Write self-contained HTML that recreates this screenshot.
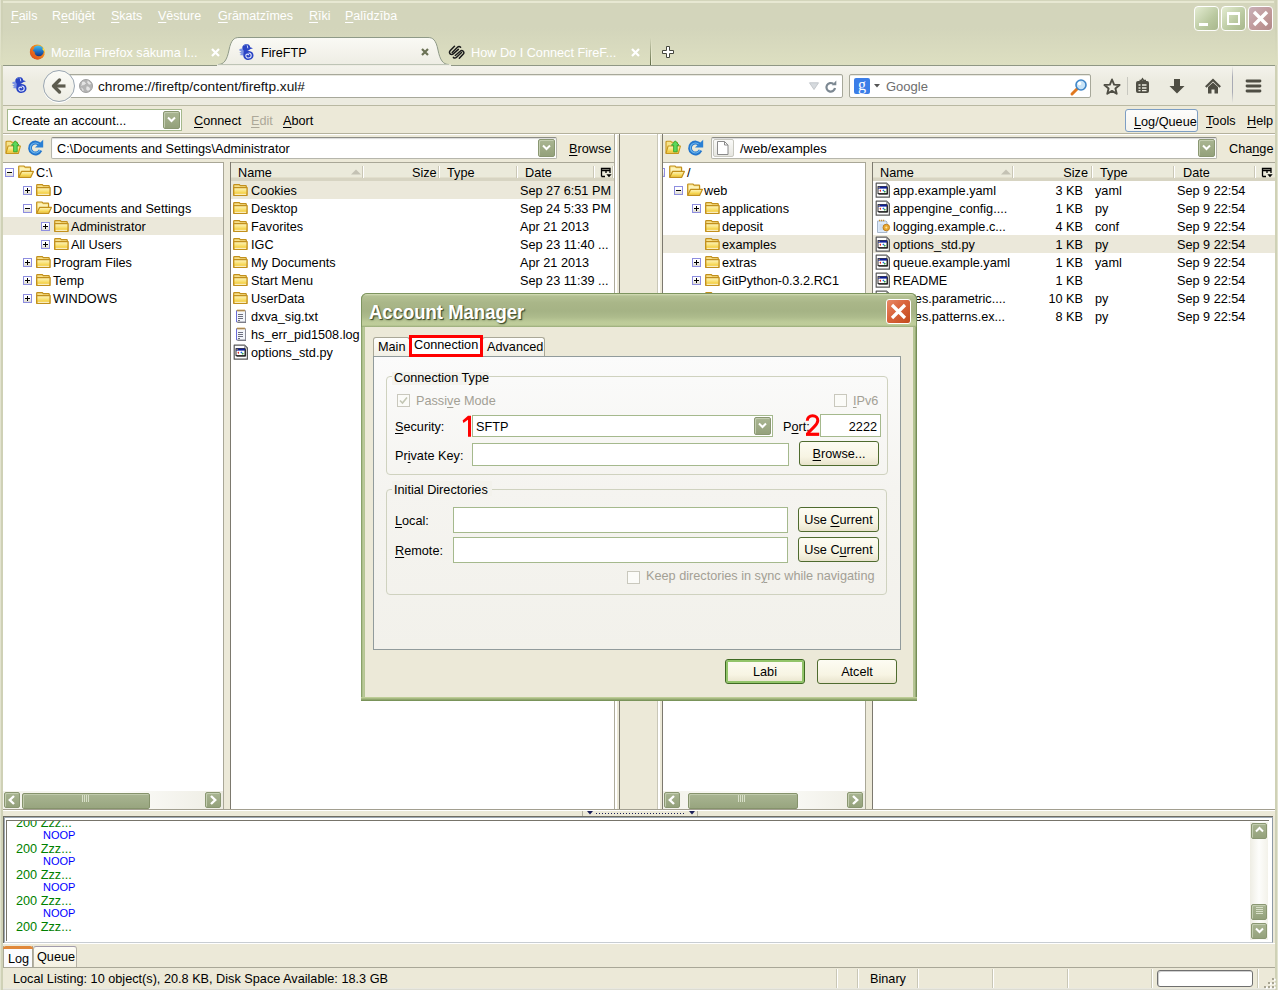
<!DOCTYPE html>
<html><head><meta charset="utf-8">
<style>
*{box-sizing:border-box;margin:0;padding:0}
html,body{width:1278px;height:990px;overflow:hidden}
body{position:relative;background:#d3d5bb;font-family:"Liberation Sans",sans-serif;font-size:12.7px;color:#000}
.a{position:absolute}
.t{position:absolute;white-space:nowrap;line-height:18px}
.u{text-decoration:underline;text-underline-offset:2px;text-decoration-thickness:1px}
svg{position:absolute;overflow:visible}
.menu{color:#fff;font-size:12.5px;top:7px}
.row{position:absolute;height:18px;left:0;right:0}
.row .t{top:1px}
.sel{background:#ebe8da}
.exp{position:absolute;width:9px;height:9px;border:1px solid #8e8ee0;background:linear-gradient(#fff 30%,#dedcd2);top:5px}
.exp:before{content:"";position:absolute;left:1px;top:3px;width:5px;height:1px;background:#000}
.exp.p:after{content:"";position:absolute;left:3px;top:1px;width:1px;height:5px;background:#000}
.hdr{position:absolute;height:18px;background:#ebeadb;border-bottom:3px solid #d7d4c2;box-shadow:inset 0 -1px 0 #e2dfcd}
.hsep{position:absolute;top:3px;width:2px;height:12px;border-left:1px solid #cac7b6;border-right:1px solid #fff}
.fi{position:absolute;width:16px;height:16px;top:1px}
.sb{position:absolute;width:16px;height:16px;border-radius:2px;background:linear-gradient(#a9b592,#94a17b);border:1px solid #8a9772;box-shadow:inset 1px 1px 0 #c3cdb0}
.thumb{position:absolute;height:16px;border-radius:2px;background:linear-gradient(#a9b592,#98a57f);border:1px solid #86936c;box-shadow:inset 1px 1px 0 #c0caab}
.inp{position:absolute;background:#fff;border:1px solid #a5b98d}
.btn{position:absolute;border:1px solid #4f6b2f;border-radius:3px;background:linear-gradient(#fdfcf3,#f7f4e3 65%,#e8e3cc);text-align:center;line-height:24px}
.chk{position:absolute;width:13px;height:13px;border:1px solid #c9c8bd;background:#fbfbf8}
.gray{color:#a3a095}
</style></head><body>
<svg width="0" height="0" style="position:absolute">
<defs>
<linearGradient id="fgy" x1="0" y1="0" x2="0" y2="1"><stop offset="0" stop-color="#fff6b8"/><stop offset="1" stop-color="#f2cf4a"/></linearGradient>
<linearGradient id="fgb" x1="0" y1="0" x2="0" y2="1"><stop offset="0" stop-color="#fbe88e"/><stop offset="1" stop-color="#e9c24a"/></linearGradient>
<linearGradient id="fgf" x1="0" y1="0" x2="0" y2="1"><stop offset="0" stop-color="#fef6c0"/><stop offset=".45" stop-color="#f9e27a"/><stop offset=".8" stop-color="#f2cc3a"/><stop offset="1" stop-color="#fbeaa8"/></linearGradient>
<symbol id="fc" viewBox="0 0 16 16">
<path d="M.7 13.3V3.2C.7 2.7 1 2.6 1.4 2.6H6.3L7.3 3.7H12.6C13 3.7 13.3 4 13.3 4.4V6H.7z" fill="#f7e08a" stroke="#c2901c" stroke-width="1.2"/>
<path d="M.7 5.6H14.1V13.3H.7z" fill="url(#fgf)" stroke="#c2901c" stroke-width="1.3" stroke-linejoin="round"/>
<path d="M1.8 12.3H13" stroke="#fffbe8" stroke-width=".9"/>
</symbol>
<symbol id="fo" viewBox="0 0 16 16">
<path d="M.7 13.3V2.6C.7 2.2 1 2 1.4 2H6L7 3.1H12C12.4 3.1 12.6 3.4 12.6 3.8V7.6" fill="#f7e08a" stroke="#c2901c" stroke-width="1.2"/>
<path d="M1.8 3.5H6.2L7 4.4H11.6V7.5H1.8z" fill="#fdf3b8"/>
<path d="M.7 13.3L3.6 7.4H15.4L12.7 13.3z" fill="url(#fgf)" stroke="#c2901c" stroke-width="1.2" stroke-linejoin="round"/>
</symbol>
<symbol id="fnote" viewBox="0 0 16 16">
<path d="M4.5 2.5h7.5c.6 0 1 .4 1 1v11.5h-8.5z" fill="#6e6e78"/>
<path d="M3.5 2.5h8c.6 0 1 .4 1 1v10.5h-9z" fill="#f3f6fb" stroke="#8a8c98"/>
<path d="M3.5 3v11" stroke="#6a6ad8"/>
<path d="M5 1.5v2M7 1.5v2M9 1.5v2M11 1.5v2" stroke="#c08828" stroke-width="1.2"/>
<path d="M5 6.5h5M5 8.5h5M5 10.5h5M5 12.5h2" stroke="#6e7080"/>
</symbol>
<symbol id="fapp" viewBox="0 0 16 16">
<path d="M1.2 1.2H11.6L14.4 4V15.2H1.2z" fill="#fdfdfd" stroke="#5a5a5a" stroke-width="1.2" stroke-linejoin="round"/>
<path d="M11.6 1.2V4H14.4" fill="none" stroke="#8a8a8a" stroke-width=".8"/>
<rect x="3" y="4.6" width="9" height="7" fill="#fff" stroke="#1a1a1a" stroke-width=".9"/>
<rect x="3" y="4.6" width="9" height="2" fill="#10209a"/>
<rect x="3.6" y="4.9" width="1" height="1" fill="#f0c020"/>
<path d="M4.3 8.8L6 7.6V10z" fill="#e02020"/>
<path d="M8.4 7.6L9.5 8.6 8.4 9.6 7.3 8.6z" fill="#1a6ae0"/>
<path d="M9.8 8.8L10.9 9.8 9.8 10.8 8.7 9.8z" fill="#20a030"/>
<path d="M3.5 12.2H12.6V5.2" fill="none" stroke="#222" stroke-width="1"/>
</symbol>
<symbol id="fconf" viewBox="0 0 16 16">
<path d="M2.5 3h8.5l1 1v10.5h-9.5z" fill="#dce9f8" stroke="#a8b8cc"/>
<path d="M4 2.5h6" stroke="#c89030" stroke-width="1.6" stroke-dasharray="1.2 .8"/>
<path d="M4.5 7h4M4.5 9h3M4.5 11h4" stroke="#b8c8dc" stroke-width=".8"/>
<circle cx="11.3" cy="9.5" r="3.3" fill="#eaa830" stroke="#b87818" stroke-width=".9"/>
<circle cx="11.3" cy="9.5" r="1" fill="#fbe6a8"/>
</symbol>
</defs>
</svg>

<!-- window frame lines -->
<div class="a" style="left:2px;top:1px;width:1272px;height:2px;background:#e7e8d2"></div>
<div class="a" style="left:0;top:0;width:3px;height:990px;background:#cfd1b6;border-left:1px solid #e2e3cf"></div>
<div class="a" style="left:1275px;top:0;width:3px;height:990px;background:#cfd1b6;border-right:1px solid #e2e3cf"></div>

<!-- MENU -->
<div class="t menu" style="left:11px"><span class="u">F</span>ails</div>
<div class="t menu" style="left:52px">R<span class="u">e</span>diģēt</div>
<div class="t menu" style="left:111px"><span class="u">S</span>kats</div>
<div class="t menu" style="left:158px"><span class="u">V</span>ēsture</div>
<div class="t menu" style="left:218px"><span class="u">G</span>rāmatzīmes</div>
<div class="t menu" style="left:309px"><span class="u">R</span>īki</div>
<div class="t menu" style="left:345px"><span class="u">P</span>alīdzība</div>

<!-- window buttons -->
<div class="a" style="left:1194px;top:6px;width:25px;height:25px;border:1px solid #fff;border-radius:4px;background:linear-gradient(135deg,#e4ecd2,#bac9a0 60%,#a8b78c)"></div>
<div class="a" style="left:1199px;top:23px;width:9px;height:3px;background:#fff"></div>
<div class="a" style="left:1221px;top:6px;width:25px;height:25px;border:1px solid #fff;border-radius:4px;background:linear-gradient(135deg,#e4ecd2,#bac9a0 60%,#a8b78c)"></div>
<div class="a" style="left:1227px;top:12px;width:13px;height:13px;border:2px solid #fff;border-top-width:3px"></div>
<div class="a" style="left:1248px;top:6px;width:25px;height:25px;border:1px solid #fff;border-radius:4px;background:linear-gradient(135deg,#c8b0b8,#c09898 60%,#b08888)"></div>
<svg style="left:1252px;top:10px" width="17" height="17"><path d="M2 2L15 15M15 2L2 15" stroke="#fff" stroke-width="3.4"/></svg>

<!-- TABS -->
<div class="a" style="left:0;top:28px;width:1278px;height:37px;background:linear-gradient(rgba(221,223,193,0),#dddfc1)"></div>
<div class="a" style="left:3px;top:65px;width:1272px;height:1px;background:#8f9784"></div>
<svg style="left:218px;top:36px" width="232" height="30">
<defs><linearGradient id="tabg" x1="0" y1="0" x2="0" y2="1"><stop offset="0" stop-color="#fafaf5"/><stop offset="1" stop-color="#eeede4"/></linearGradient></defs>
<path d="M0 28.5 C6 28.5 9 24 11 14 C13 4 16 1.5 21 1.5 H210 C215 1.5 218 4 220 14 C222 24 225 28.5 231 28.5 Z" fill="url(#tabg)" stroke="#8f9a88" stroke-width="1"/>
<rect x="-1" y="28.5" width="234" height="2" fill="#eeede4"/>
</svg>
<!-- tab1 firefox -->
<svg style="left:29px;top:44px" width="16" height="16">
<defs><linearGradient id="ffb" x1="0" y1="0" x2="0" y2="1"><stop offset="0" stop-color="#45c4f4"/><stop offset=".55" stop-color="#1f6cc0"/><stop offset="1" stop-color="#16307a"/></linearGradient>
<linearGradient id="ffo" x1="1" y1="0" x2="0" y2="1"><stop offset="0" stop-color="#ffd21e"/><stop offset=".35" stop-color="#f38a1c"/><stop offset="1" stop-color="#d8401a"/></linearGradient></defs>
<circle cx="8.3" cy="8" r="7.5" fill="url(#ffo)"/>
<circle cx="9.2" cy="7" r="5.6" fill="url(#ffb)"/>
<path d="M1 6.5C1.2 11.8 4.8 15.5 9 15.4 12.5 15.3 15.2 12.8 15.6 9.8 14.2 11.8 11.8 12.8 9.5 12.5 6.8 12.1 5.3 10 5.6 7.8 4.6 7.5 3.6 6.6 3.8 5.2 4.5 5.6 5.2 5.4 5.6 4.8 4.6 4.2 4.2 3.2 4.5 1.8 2.6 2.8 1.4 4.4 1 6.5z" fill="url(#ffo)"/>
<path d="M14 3.3C15.3 5 15.8 7 15.6 8.8 15 7 14.3 6 13.4 5.5z" fill="#ffe040"/>
</svg>
<div class="t" style="left:51px;top:44px;color:#fff;font-size:12.7px">Mozilla Firefox sākuma l...</div>
<svg style="left:211px;top:48px" width="9" height="9"><path d="M1 1L8 8M8 1L1 8" stroke="#fff" stroke-width="2.2"/></svg>
<!-- tab2 fireftp -->
<svg style="left:239px;top:44px" width="16" height="17"><g id="sea">
<path d="M0.5 5L4.5 4.2 4.8 11.5 0.5 11 2.5 9.8 0.3 8.8 2.5 7.6 0.3 6.5z" fill="#7d94e4"/>
<path d="M3.5 2.5C4.5 0.5 6.5 0 8.5 0.3 10 0.6 11 1.6 11.2 3.2L14 4.3 11 5.3C10.5 6.2 9.3 6.7 8 6.9L10 6.9C12.8 7 14.5 8.8 14.5 11.3 14.5 14 12.3 16 9.5 16 6.5 16 4.3 14 4.3 11.2 4.3 9 4.8 7.5 4.3 6.3 3.6 5 3 3.8 3.5 2.5z" fill="#2a44c4"/>
<path d="M9.5 9C11 9 12.2 10.1 12.2 11.5S11 14 9.4 14C7.9 14 6.8 12.9 6.8 11.7 6.8 10.7 7.5 10.1 8.4 10.1 9.2 10.1 9.7 10.7 9.7 11.3" fill="none" stroke="#dfe6fb" stroke-width="1.1"/>
<path d="M8.3 1.5L8.8 4.3" stroke="#c8d4f8" stroke-width="1"/>
<path d="M5 1.5C6 .8 7 .7 8 1" stroke="#6f8ff0" stroke-width="1"/>
</g></svg>
<div class="t" style="left:261px;top:44px;color:#000;font-size:12.7px">FireFTP</div>
<svg style="left:421px;top:48px" width="8" height="8"><path d="M1 1L7 7M7 1L1 7" stroke="#6b7255" stroke-width="2.2"/></svg>
<!-- tab3 squarespace -->
<svg style="left:446px;top:43px" width="22" height="18"><g fill="none" stroke="#1a1a1a" stroke-width="1.5" stroke-linecap="round"><path d="M8.5 3.3L4.3 7.5C3 8.8 3.3 10.6 4.6 11.2 5.6 11.7 6.7 11.4 7.5 10.6L12.4 6.4"/><path d="M6.2 9.5L11.5 4.2C12.3 3.4 13.7 3.3 14.6 4.3"/><path d="M9.3 12.5L14.2 8.2C15 7.4 16.3 7.3 17.2 8.2 18.2 9.2 18 10.3 17.3 11L13.3 15.3"/><path d="M15.5 9.5L10.3 14.5C9.5 15.3 8.2 15.3 7.4 14.4"/></g></svg>
<div class="t" style="left:471px;top:44px;color:#fff;font-size:12.7px">How Do I Connect FireF...</div>
<svg style="left:631px;top:48px" width="9" height="9"><path d="M1 1L8 8M8 1L1 8" stroke="#fff" stroke-width="2.2"/></svg>
<div class="a" style="left:650px;top:38px;width:1px;height:27px;background:linear-gradient(rgba(90,100,60,0),#5f6a45)"></div><div class="a" style="left:651px;top:38px;width:1px;height:27px;background:linear-gradient(rgba(255,255,240,0),#eef0d8)"></div>
<svg style="left:662px;top:46px" width="12" height="12"><path d="M4.5 .5h3v4h4v3h-4v4h-3v-4h-4v-3h4z" fill="#fff" stroke="#45473e" stroke-linejoin="round"/></svg>
<!-- NAVBAR -->
<div class="a" style="left:3px;top:66px;width:1272px;height:40px;background:linear-gradient(#f4f3ec,#ecebe0 40%);border-bottom:1px solid #b9b8a2"></div>
<svg style="left:12px;top:77px" width="16" height="17"><use href="#sea"/></svg>
<!-- url bar -->
<div class="a" style="left:68px;top:74px;width:775px;height:24px;background:#fff;border:1px solid #a7a89a;border-radius:2px;box-shadow:inset 0 1px 0 #e8e8e0"></div>
<div class="a" style="left:43px;top:70px;width:32px;height:32px;border-radius:50%;border:1px solid #9aa6b2;background:linear-gradient(#fbfbf7,#eeede4);box-shadow:0 1px 0 #fff"></div>
<svg style="left:51px;top:77px" width="16" height="18"><path d="M3.5 9H14.5" stroke="#5d5c4f" stroke-width="3.2"/><path d="M8.5 3L2.5 9 8.5 15" fill="none" stroke="#5d5c4f" stroke-width="3.4" stroke-linecap="round" stroke-linejoin="round"/></svg>
<svg style="left:79px;top:79px" width="14" height="14"><circle cx="7" cy="7" r="6.5" fill="#b4b4b4" stroke="#a0a0a0"/><path d="M3 3.5C4.5 2.5 6 3 6.5 4.5 5.5 6 3.5 5.5 2.5 6.5M8.5 2C10 2.5 11 3.5 11.5 5 10 5.5 9 4.5 8.5 3.5M7.5 8C9 7.5 11 8.5 10.5 10.5 9 12 7.5 11 7.5 9.5M2.5 9C3.5 9.5 4.5 10.5 4 12" fill="#e4e4e4" stroke="#e8e8e8" stroke-width=".8"/></svg>
<div class="t" style="left:98px;top:78px;font-size:13.7px;color:#111">chrome://fireftp/content/fireftp.xul#</div>
<svg style="left:809px;top:82px" width="10" height="8"><path d="M.5 .8H9.5L5 7.5z" fill="#d6dade" stroke="#c4c8cc"/></svg>
<svg style="left:824px;top:80px" width="14" height="14"><path d="M11 8A4.3 4.3 0 1 1 9.4 3.9" fill="none" stroke="#7c8892" stroke-width="2.2"/><path d="M7.8 5.3H12.3V.5z" fill="#7c8892"/></svg>
<!-- search -->
<div class="a" style="left:849px;top:74px;width:242px;height:24px;background:#fff;border:1px solid #a7a89a;border-radius:2px;box-shadow:inset 0 1px 0 #e8e8e0"></div>
<div class="a" style="left:854px;top:78px;width:16px;height:16px;background:#3b7ee8;border-radius:2px;color:#fff;font-family:'Liberation Serif',serif;font-size:16px;line-height:13px;text-align:center">g</div>
<svg style="left:874px;top:84px" width="6" height="4"><path d="M0 0H6L3 3.5z" fill="#555"/></svg>
<div class="t" style="left:886px;top:78px;font-size:13px;color:#6e6e6e">Google</div>
<svg style="left:1070px;top:78px" width="18" height="18"><path d="M2 16L7.5 10.5" stroke="#e07820" stroke-width="3" stroke-linecap="round"/><circle cx="11" cy="7" r="5" fill="#c8e4f8" stroke="#3f86c8" stroke-width="1.6"/><circle cx="9.5" cy="5.5" r="1.8" fill="#fff"/></svg>
<!-- toolbar icons -->
<svg style="left:1103px;top:78px" width="18" height="17"><path d="M9 1.5L11.1 6.6 16.6 7 12.4 10.5 13.7 15.8 9 12.9 4.3 15.8 5.6 10.5 1.4 7 6.9 6.6z" fill="none" stroke="#4f4e44" stroke-width="1.9" stroke-linejoin="round"/></svg>
<div class="a" style="left:1127px;top:77px;width:1px;height:18px;background:#c8c8c0"></div>
<svg style="left:1135px;top:78px" width="15" height="16"><path d="M4.5 2.5h2l1-1.5 1 1.5h2.5" fill="none" stroke="#4f4e44" stroke-width="1.6"/><rect x="1" y="3" width="13" height="12" rx="2" fill="#4f4e44"/><path d="M3.5 7h2M7 7h4.5M3.5 10h2M7 10h4.5M3.5 12.7h2M7 12.7h4.5" stroke="#ecebe0" stroke-width="1.3"/></svg>
<svg style="left:1169px;top:78px" width="16" height="16"><path d="M5 1h6v7h4.5L8 15.5.5 8H5z" fill="#4f4e44"/></svg>
<svg style="left:1205px;top:79px" width="16" height="15"><path d="M.8 8L8 1 15.2 8" fill="none" stroke="#4f4e44" stroke-width="2.2"/><path d="M3 8L8 3.5 13 8V14.5H9.5V10.5H6.5V14.5H3z" fill="#4f4e44"/></svg>
<div class="a" style="left:1232px;top:66px;width:1px;height:37px;background:linear-gradient(rgba(160,160,170,0),#a8aab4 30%,#a8aab4 70%,rgba(160,160,170,0))"></div>
<svg style="left:1245px;top:79px" width="18" height="14"><path d="M2 2H15M2 7H15M2 12H15" stroke="#4f4e44" stroke-width="2.8" stroke-linecap="round"/></svg>

<!-- FTP TOOLBAR area bg -->
<div class="a" style="left:3px;top:106px;width:1272px;height:884px;background:#ece9d8"></div>
<div class="a" style="left:3px;top:133px;width:1272px;height:1px;background:#b4b19c;box-shadow:0 1px 0 #fff"></div>
<!-- account select -->
<div class="a" style="left:7px;top:109px;width:175px;height:22px;background:#fff;border:1px solid #a5b98d"></div>
<div class="t" style="left:12px;top:112px">Create an account...</div>
<div class="sb" style="left:163px;top:111px;width:17px;height:18px"></div>
<svg style="left:167px;top:116px" width="9" height="7"><path d="M1 1.5L4.5 5 8 1.5" fill="none" stroke="#fff" stroke-width="2"/></svg>
<div class="t" style="left:194px;top:112px"><span class="u">C</span>onnect</div>
<div class="t" style="left:251px;top:112px;color:#aca899"><span class="u">E</span>dit</div>
<div class="t" style="left:283px;top:112px"><span class="u">A</span>bort</div>
<div class="a" style="left:1125px;top:109px;width:73px;height:23px;background:linear-gradient(#fdfdfb,#f4f3ee);border:1px solid #7d9ec4;border-radius:3px"></div>
<div class="t" style="left:1134px;top:113px"><span class="u">L</span>og/Queue</div>
<div class="t" style="left:1206px;top:112px"><span class="u">T</span>ools</div>
<div class="t" style="left:1247px;top:112px"><span class="u">H</span>elp</div>
<!-- PATH BARS -->
<svg style="left:5px;top:140px" width="17" height="15"><path d="M1 13V2.2C1 1.6 1.4 1.3 2 1.3H5.8L6.8 2.3H11.5C12 2.3 12.4 2.6 12.4 3.1V6" fill="#f6e28a" stroke="#c8961c" stroke-width="1.1"/><path d="M1 13.4L3.1 6H15.4L13.4 13.4z" fill="url(#fgf)" stroke="#c8961c" stroke-width="1.1" stroke-linejoin="round"/><path d="M10.3 .8L14.2 5.3H12.2V11.8H8.6V5.3H6.4z" fill="#5ad85a" stroke="#2a9a2a" stroke-width=".8"/></svg>
<svg style="left:27px;top:139px" width="17" height="17"><path d="M13 5.85A5.5 5.5 0 1 0 13.5 11.3" fill="none" stroke="#2476cc" stroke-width="3.8"/><path d="M12.6 6.3A5 5 0 1 0 13 10.9" fill="none" stroke="#6cb6ee" stroke-width="1.2"/><path d="M8 8.6H16.2V.8z" fill="#2a80d4"/></svg>
<div class="a" style="left:51px;top:137px;width:506px;height:22px;background:#fff;border:1px solid #b6b6ac;border-top-color:#8d8d86;border-radius:2px;box-shadow:inset 0 1px 1px rgba(0,0,0,.15)"></div>
<div class="t" style="left:57px;top:140px">C:\Documents and Settings\Administrator</div>
<div class="sb" style="left:538px;top:139px;width:17px;height:18px"></div>
<svg style="left:542px;top:144px" width="9" height="7"><path d="M1 1.5L4.5 5 8 1.5" fill="none" stroke="#fff" stroke-width="2"/></svg>
<div class="t" style="left:569px;top:140px"><span class="u">B</span>rowse</div>

<svg style="left:665px;top:140px" width="17" height="15"><path d="M1 13V2.2C1 1.6 1.4 1.3 2 1.3H5.8L6.8 2.3H11.5C12 2.3 12.4 2.6 12.4 3.1V6" fill="#f6e28a" stroke="#c8961c" stroke-width="1.1"/><path d="M1 13.4L3.1 6H15.4L13.4 13.4z" fill="url(#fgf)" stroke="#c8961c" stroke-width="1.1" stroke-linejoin="round"/><path d="M10.3 .8L14.2 5.3H12.2V11.8H8.6V5.3H6.4z" fill="#5ad85a" stroke="#2a9a2a" stroke-width=".8"/></svg>
<svg style="left:687px;top:139px" width="17" height="17"><path d="M13 5.85A5.5 5.5 0 1 0 13.5 11.3" fill="none" stroke="#2476cc" stroke-width="3.8"/><path d="M12.6 6.3A5 5 0 1 0 13 10.9" fill="none" stroke="#6cb6ee" stroke-width="1.2"/><path d="M8 8.6H16.2V.8z" fill="#2a80d4"/></svg>
<div class="a" style="left:711px;top:137px;width:506px;height:22px;background:#fff;border:1px solid #b6b6ac;border-top-color:#8d8d86;border-radius:2px;box-shadow:inset 0 1px 1px rgba(0,0,0,.15)"></div>
<div class="a" style="left:713px;top:139px;width:21px;height:18px;background:linear-gradient(#fafaf8,#e6e6e0);border:1px solid #c8c8c0;border-radius:2px"></div>
<svg style="left:717px;top:141px" width="12" height="14"><path d="M.5 .5h7l3.5 3.5v9.5H.5z" fill="#fff" stroke="#8a8a8a"/><path d="M7.5 .5v3.5h3.5" fill="none" stroke="#8a8a8a"/></svg>
<div class="t" style="left:740px;top:140px;font-size:13px">/web/examples</div>
<div class="sb" style="left:1198px;top:139px;width:17px;height:18px"></div>
<svg style="left:1202px;top:144px" width="9" height="7"><path d="M1 1.5L4.5 5 8 1.5" fill="none" stroke="#fff" stroke-width="2"/></svg>
<div class="t" style="left:1229px;top:140px">Cha<span class="u">n</span>ge</div>

<!-- LEFT TREE -->
<div class="a" style="left:3px;top:162px;width:221px;height:647px;background:#fff;border-top:1px solid #a9a797;border-right:1px solid #a9a797;overflow:hidden" id="ltree">
 <div class="row" style="top:0"><div class="exp" style="left:2px"></div><svg class="fi" style="left:15px"><use href="#fo"/></svg><div class="t" style="left:33px">C:\</div></div>
 <div class="row" style="top:18px"><div class="exp p" style="left:20px"></div><svg class="fi" style="left:33px"><use href="#fc"/></svg><div class="t" style="left:50px">D</div></div>
 <div class="row" style="top:36px"><div class="exp" style="left:20px"></div><svg class="fi" style="left:33px"><use href="#fo"/></svg><div class="t" style="left:50px">Documents and Settings</div></div>
 <div class="row sel" style="top:54px"><div class="exp p" style="left:38px"></div><svg class="fi" style="left:51px"><use href="#fc"/></svg><div class="t" style="left:68px">Administrator</div></div>
 <div class="row" style="top:72px"><div class="exp p" style="left:38px"></div><svg class="fi" style="left:51px"><use href="#fc"/></svg><div class="t" style="left:68px">All Users</div></div>
 <div class="row" style="top:90px"><div class="exp p" style="left:20px"></div><svg class="fi" style="left:33px"><use href="#fc"/></svg><div class="t" style="left:50px">Program Files</div></div>
 <div class="row" style="top:108px"><div class="exp p" style="left:20px"></div><svg class="fi" style="left:33px"><use href="#fc"/></svg><div class="t" style="left:50px">Temp</div></div>
 <div class="row" style="top:126px"><div class="exp p" style="left:20px"></div><svg class="fi" style="left:33px"><use href="#fc"/></svg><div class="t" style="left:50px">WINDOWS</div></div>
 <!-- h scrollbar -->
 <div class="a" style="left:0;top:628px;width:220px;height:18px;background:linear-gradient(90deg,#f3f2ea,#fdfdfb 50%,#eeede4)"></div>
 <div class="sb" style="left:1px;top:629px"></div>
 <div class="thumb" style="left:19px;top:630px;width:128px"></div>
 <div class="sb" style="left:202px;top:629px"></div>
</div>
<svg style="left:8px;top:795px" width="8" height="10"><path d="M6 1L1.8 5 6 9" fill="none" stroke="#fff" stroke-width="2.4"/></svg>
<svg style="left:209px;top:795px" width="8" height="10"><path d="M2 1L6.2 5 2 9" fill="none" stroke="#fff" stroke-width="2.4"/></svg>
<svg style="left:82px;top:795px" width="8" height="7"><path d="M.5 0v7M2.5 0v7M4.5 0v7M6.5 0v7" stroke="#d8dfc8" stroke-width="1"/></svg>

<!-- left splitter tree/list -->
<div class="a" style="left:230px;top:162px;width:1px;height:647px;background:#7c796e"></div>

<!-- LEFT LIST -->
<div class="a" style="left:231px;top:162px;width:383px;height:647px;background:#fff;border-top:1px solid #a9a797;overflow:hidden">
 <div class="hdr" style="left:0;top:0;width:383px"></div>
 <div class="t" style="left:7px;top:1px">Name</div>
 <svg style="left:120px;top:6px" width="10" height="6"><path d="M0 5.5L5 .5 10 5.5z" fill="#c4c2b4"/></svg>
 <div class="hsep" style="left:131px"></div>
 <div class="t" style="left:181px;top:1px;width:23px;text-align:right">Size</div>
 <div class="hsep" style="left:207px"></div>
 <div class="t" style="left:216px;top:1px">Type</div>
 <div class="hsep" style="left:285px"></div>
 <div class="t" style="left:294px;top:1px">Date</div>
 <div class="hsep" style="left:362px"></div>
 <div class="hsep" style="left:381px"></div><svg style="left:369px;top:4px" width="12" height="11"><path d="M1.5 9.5V1.5H10V6M1.5 9.5H5M1.5 3.5H10M6 3.5V6" fill="none" stroke="#000" stroke-width="1.3"/><path d="M6.3 7.2H11.7L9 10.2z" fill="#000"/></svg>
 <div class="row sel" style="top:18px"><svg class="fi" style="left:2px"><use href="#fc"/></svg><div class="t" style="left:20px">Cookies</div><div class="t" style="left:289px">Sep 27 6:51 PM</div></div>
 <div class="row" style="top:36px"><svg class="fi" style="left:2px"><use href="#fc"/></svg><div class="t" style="left:20px">Desktop</div><div class="t" style="left:289px">Sep 24 5:33 PM</div></div>
 <div class="row" style="top:54px"><svg class="fi" style="left:2px"><use href="#fc"/></svg><div class="t" style="left:20px">Favorites</div><div class="t" style="left:289px">Apr 21 2013</div></div>
 <div class="row" style="top:72px"><svg class="fi" style="left:2px"><use href="#fc"/></svg><div class="t" style="left:20px">IGC</div><div class="t" style="left:289px">Sep 23 11:40 ...</div></div>
 <div class="row" style="top:90px"><svg class="fi" style="left:2px"><use href="#fc"/></svg><div class="t" style="left:20px">My Documents</div><div class="t" style="left:289px">Apr 21 2013</div></div>
 <div class="row" style="top:108px"><svg class="fi" style="left:2px"><use href="#fc"/></svg><div class="t" style="left:20px">Start Menu</div><div class="t" style="left:289px">Sep 23 11:39 ...</div></div>
 <div class="row" style="top:126px"><svg class="fi" style="left:2px"><use href="#fc"/></svg><div class="t" style="left:20px">UserData</div></div>
 <div class="row" style="top:144px"><svg class="fi" style="left:2px"><use href="#fnote"/></svg><div class="t" style="left:20px">dxva_sig.txt</div></div>
 <div class="row" style="top:162px"><svg class="fi" style="left:2px"><use href="#fnote"/></svg><div class="t" style="left:20px">hs_err_pid1508.log</div></div>
 <div class="row" style="top:180px"><svg class="fi" style="left:2px"><use href="#fapp"/></svg><div class="t" style="left:20px">options_std.py</div></div>
</div>

<!-- middle splitter -->
<div class="a" style="left:614px;top:134px;width:1px;height:675px;background:#aeab9b"></div>
<div class="a" style="left:615px;top:134px;width:2px;height:675px;background:#fff"></div>
<div class="a" style="left:619px;top:134px;width:1px;height:675px;background:#7c796e"></div>
<div class="a" style="left:657px;top:134px;width:1px;height:675px;background:#c9c7b8"></div>
<div class="a" style="left:658px;top:134px;width:2px;height:675px;background:#fff"></div>
<div class="a" style="left:662px;top:134px;width:1px;height:675px;background:#7c796e"></div>

<!-- RIGHT TREE -->
<div class="a" style="left:663px;top:162px;width:203px;height:647px;background:#fff;border-top:1px solid #a9a797;border-right:1px solid #a9a797;overflow:hidden">
 <div class="row" style="top:0"><div class="exp" style="left:-7px"></div><svg class="fi" style="left:6px"><use href="#fo"/></svg><div class="t" style="left:24px">/</div></div>
 <div class="row" style="top:18px"><div class="exp" style="left:11px"></div><svg class="fi" style="left:24px"><use href="#fo"/></svg><div class="t" style="left:41px">web</div></div>
 <div class="row" style="top:36px"><div class="exp p" style="left:29px"></div><svg class="fi" style="left:42px"><use href="#fc"/></svg><div class="t" style="left:59px">applications</div></div>
 <div class="row" style="top:54px"><svg class="fi" style="left:42px"><use href="#fc"/></svg><div class="t" style="left:59px">deposit</div></div>
 <div class="row sel" style="top:72px"><svg class="fi" style="left:42px"><use href="#fc"/></svg><div class="t" style="left:59px">examples</div></div>
 <div class="row" style="top:90px"><div class="exp p" style="left:29px"></div><svg class="fi" style="left:42px"><use href="#fc"/></svg><div class="t" style="left:59px">extras</div></div>
 <div class="row" style="top:108px"><div class="exp p" style="left:29px"></div><svg class="fi" style="left:42px"><use href="#fc"/></svg><div class="t" style="left:59px">GitPython-0.3.2.RC1</div></div>
 <div class="row" style="top:126px"><div class="exp p" style="left:29px"></div><svg class="fi" style="left:42px"><use href="#fc"/></svg><div class="t" style="left:59px">html5lib</div></div>
 <div class="a" style="left:0;top:628px;width:202px;height:18px;background:linear-gradient(90deg,#f3f2ea,#fdfdfb 50%,#eeede4)"></div>
 <div class="sb" style="left:1px;top:629px"></div>
 <div class="thumb" style="left:25px;top:630px;width:110px"></div>
 <div class="sb" style="left:184px;top:629px"></div>
</div>
<svg style="left:668px;top:795px" width="8" height="10"><path d="M6 1L1.8 5 6 9" fill="none" stroke="#fff" stroke-width="2.4"/></svg>
<svg style="left:851px;top:795px" width="8" height="10"><path d="M2 1L6.2 5 2 9" fill="none" stroke="#fff" stroke-width="2.4"/></svg>
<svg style="left:738px;top:795px" width="8" height="7"><path d="M.5 0v7M2.5 0v7M4.5 0v7M6.5 0v7" stroke="#d8dfc8" stroke-width="1"/></svg>
<div class="a" style="left:872px;top:162px;width:1px;height:647px;background:#7c796e"></div>

<!-- RIGHT LIST -->
<div class="a" style="left:873px;top:162px;width:402px;height:647px;background:#fff;border-top:1px solid #a9a797;overflow:hidden">
 <div class="hdr" style="left:0;top:0;width:402px"></div>
 <div class="t" style="left:7px;top:1px">Name</div>
 <svg style="left:128px;top:6px" width="10" height="6"><path d="M0 5.5L5 .5 10 5.5z" fill="#c4c2b4"/></svg>
 <div class="hsep" style="left:139px"></div>
 <div class="t" style="left:190px;top:1px;width:25px;text-align:right">Size</div>
 <div class="hsep" style="left:218px"></div>
 <div class="t" style="left:227px;top:1px">Type</div>
 <div class="hsep" style="left:300px"></div>
 <div class="t" style="left:310px;top:1px">Date</div>
 <div class="hsep" style="left:381px"></div>
 <svg style="left:388px;top:4px" width="12" height="11"><path d="M1.5 9.5V1.5H10V6M1.5 9.5H5M1.5 3.5H10M6 3.5V6" fill="none" stroke="#000" stroke-width="1.3"/><path d="M6.3 7.2H11.7L9 10.2z" fill="#000"/></svg>
 <div class="row" style="top:18px"><svg class="fi" style="left:2px"><use href="#fapp"/></svg><div class="t" style="left:20px">app.example.yaml</div><div class="t" style="left:150px;width:60px;text-align:right">3 KB</div><div class="t" style="left:222px">yaml</div><div class="t" style="left:304px">Sep 9 22:54</div></div>
 <div class="row" style="top:36px"><svg class="fi" style="left:2px"><use href="#fapp"/></svg><div class="t" style="left:20px">appengine_config....</div><div class="t" style="left:150px;width:60px;text-align:right">1 KB</div><div class="t" style="left:222px">py</div><div class="t" style="left:304px">Sep 9 22:54</div></div>
 <div class="row" style="top:54px"><svg class="fi" style="left:2px"><use href="#fconf"/></svg><div class="t" style="left:20px">logging.example.c...</div><div class="t" style="left:150px;width:60px;text-align:right">4 KB</div><div class="t" style="left:222px">conf</div><div class="t" style="left:304px">Sep 9 22:54</div></div>
 <div class="row sel" style="top:72px"><svg class="fi" style="left:2px"><use href="#fapp"/></svg><div class="t" style="left:20px">options_std.py</div><div class="t" style="left:150px;width:60px;text-align:right">1 KB</div><div class="t" style="left:222px">py</div><div class="t" style="left:304px">Sep 9 22:54</div></div>
 <div class="row" style="top:90px"><svg class="fi" style="left:2px"><use href="#fapp"/></svg><div class="t" style="left:20px">queue.example.yaml</div><div class="t" style="left:150px;width:60px;text-align:right">1 KB</div><div class="t" style="left:222px">yaml</div><div class="t" style="left:304px">Sep 9 22:54</div></div>
 <div class="row" style="top:108px"><svg class="fi" style="left:2px"><use href="#fapp"/></svg><div class="t" style="left:20px">README</div><div class="t" style="left:150px;width:60px;text-align:right">1 KB</div><div class="t" style="left:304px">Sep 9 22:54</div></div>
 <div class="row" style="top:126px"><svg class="fi" style="left:2px"><use href="#fapp"/></svg><div class="t" style="left:20px">routes.parametric....</div><div class="t" style="left:150px;width:60px;text-align:right">10 KB</div><div class="t" style="left:222px">py</div><div class="t" style="left:304px">Sep 9 22:54</div></div>
 <div class="row" style="top:144px"><svg class="fi" style="left:2px"><use href="#fapp"/></svg><div class="t" style="left:20px">routes.patterns.ex...</div><div class="t" style="left:150px;width:60px;text-align:right">8 KB</div><div class="t" style="left:222px">py</div><div class="t" style="left:304px">Sep 9 22:54</div></div>
</div>

<!-- bottom splitter -->
<div class="a" style="left:3px;top:809px;width:1272px;height:1px;background:#a29f90"></div>
<div class="a" style="left:3px;top:810px;width:1272px;height:1px;background:#fff"></div>
<div class="a" style="left:582px;top:811px;width:1px;height:5px;background:#b0ae9e"></div>
<div class="a" style="left:697px;top:811px;width:1px;height:5px;background:#b0ae9e"></div>
<svg style="left:587px;top:811px" width="6" height="4"><path d="M0 0H6L3 3.5z" fill="#1c2058"/></svg>
<svg style="left:689px;top:811px" width="6" height="4"><path d="M0 0H6L3 3.5z" fill="#1c2058"/></svg>
<div class="a" style="left:596px;top:813px;width:90px;height:1px;background:repeating-linear-gradient(90deg,#1c2058 0 1px,transparent 1px 3px)"></div>

<!-- LOG -->
<div class="a" style="left:3px;top:816px;width:1270px;height:127px;background:#fff;border-top:1px solid #6f6d62;border-left:1px solid #6f6d62"></div>
<div class="a" style="left:4px;top:817px;width:1269px;height:126px;border-top:1px solid #9fa9b3;border-left:1px solid #9fa9b3;border-right:1px solid #8e99a4;border-bottom:1px solid #c8cdd2"></div>
<div class="a" style="left:6px;top:820px;width:1263px;height:121px;border-top:1px solid #77746a;border-left:1px solid #77746a"></div>
<div class="a" style="left:7px;top:821px;width:1262px;height:119px;overflow:hidden">
 <div class="t" style="left:9px;top:-4px;color:#008000;line-height:13px">200 Zzz...</div>
 <div class="t" style="left:36px;font-size:11px;top:8px;color:#0000ff;line-height:13px">NOOP</div>
 <div class="t" style="left:9px;top:22px;color:#008000;line-height:13px">200 Zzz...</div>
 <div class="t" style="left:36px;font-size:11px;top:34px;color:#0000ff;line-height:13px">NOOP</div>
 <div class="t" style="left:9px;top:48px;color:#008000;line-height:13px">200 Zzz...</div>
 <div class="t" style="left:36px;font-size:11px;top:60px;color:#0000ff;line-height:13px">NOOP</div>
 <div class="t" style="left:9px;top:74px;color:#008000;line-height:13px">200 Zzz...</div>
 <div class="t" style="left:36px;font-size:11px;top:86px;color:#0000ff;line-height:13px">NOOP</div>
 <div class="t" style="left:9px;top:100px;color:#008000;line-height:13px">200 Zzz...</div>
 <div class="a" style="left:1243px;top:1px;width:18px;height:118px;background:linear-gradient(90deg,#eeede4,#fdfdfb 50%,#f3f2ea)"></div>
 <div class="sb" style="left:1244px;top:2px"></div>
 <div class="sb" style="left:1244px;top:83px"></div>
 <div class="sb" style="left:1244px;top:102px"></div>
</div>
<svg style="left:1255px;top:826px" width="9" height="8"><path d="M1 5.5L4.5 2 8 5.5" fill="none" stroke="#fff" stroke-width="2"/></svg>
<svg style="left:1255px;top:926px" width="9" height="8"><path d="M1 2.5L4.5 6 8 2.5" fill="none" stroke="#fff" stroke-width="2"/></svg>
<svg style="left:1256px;top:907px" width="7" height="8"><path d="M0 .5h7M0 2.5h7M0 4.5h7M0 6.5h7" stroke="#d8dfc8"/></svg>

<!-- log tabs -->
<div class="a" style="left:3px;top:943px;width:1272px;height:1px;background:#fff"></div>
<div class="a" style="left:33px;top:946px;width:44px;height:21px;background:linear-gradient(#fefdf6,#f4f1e2);border:1px solid #b6b2a6;border-top-color:#a29cab;border-bottom:none;border-radius:3px 3px 0 0"></div>
<div class="a" style="left:3px;top:946px;width:30px;height:21px;background:#fbfbfd;border-left:1px solid #a9a797;border-right:1px solid #a9a797"></div>
<div class="a" style="left:3px;top:946px;width:30px;height:3px;background:#e0883a;border-radius:3px 3px 0 0"></div>
<div class="t" style="left:8px;top:950px">Log</div>
<div class="t" style="left:37px;top:948px">Queue</div>

<!-- STATUS BAR -->
<div class="a" style="left:3px;top:967px;width:1272px;height:1px;background:#a9a797"></div>
<div class="a" style="left:3px;top:968px;width:1272px;height:20px;background:#ece9d8"></div>
<div class="a" style="left:3px;top:988px;width:1272px;height:2px;background:linear-gradient(#efeee6,#d6d6cc)"></div>
<div class="t" style="left:13px;top:970px">Local Listing: 10 object(s), 20.8 KB, Disk Space Available: 18.3 GB</div>
<div class="a" style="left:836px;top:969px;width:2px;height:19px;border-left:1px solid #c9c7b6;border-right:1px solid #fff"></div>
<div class="a" style="left:857px;top:969px;width:2px;height:19px;border-left:1px solid #c9c7b6;border-right:1px solid #fff"></div>
<div class="t" style="left:870px;top:970px">Binary</div>
<div class="a" style="left:917px;top:969px;width:2px;height:19px;border-left:1px solid #c9c7b6;border-right:1px solid #fff"></div>
<div class="a" style="left:992px;top:969px;width:2px;height:19px;border-left:1px solid #c9c7b6;border-right:1px solid #fff"></div>
<div class="a" style="left:1067px;top:969px;width:2px;height:19px;border-left:1px solid #c9c7b6;border-right:1px solid #fff"></div>
<div class="a" style="left:1151px;top:969px;width:2px;height:19px;border-left:1px solid #c9c7b6;border-right:1px solid #fff"></div>
<div class="a" style="left:1157px;top:970px;width:96px;height:17px;background:#fff;border:1px solid #6f6f6f;border-radius:3px;box-shadow:inset 1px 1px 0 #d0d0d0"></div>
<div class="a" style="left:1257px;top:969px;width:2px;height:19px;border-left:1px solid #c9c7b6;border-right:1px solid #fff"></div>
<svg style="left:1262px;top:976px" width="14" height="14"><path d="M11 2h2v2h-2zM7 6h2v2H7zM11 6h2v2h-2zM3 10h2v2H3zM7 10h2v2H7zM11 10h2v2h-2z" fill="#fff" transform="translate(.7 .7)"/><path d="M10 2h2v2h-2zM6 6h2v2H6zM10 6h2v2h-2zM2 10h2v2H2zM6 10h2v2H6zM10 10h2v2h-2z" fill="#a9a693"/></svg>
<!-- DIALOG -->
<div class="a" style="left:361px;top:293px;width:556px;height:408px;border-radius:6px 6px 0 0;background:linear-gradient(90deg,#6f8a4f 0,#a4b884 1px,#c2d0a0 3px,#a8b88a 4px,#a8b88a calc(100% - 4px),#c2d0a0 calc(100% - 3px),#8ca06c calc(100% - 1px),#5e7a40 100%)"></div>
<div class="a" style="left:361px;top:293px;width:556px;height:34px;border-radius:6px 6px 0 0;background:linear-gradient(#d6dfb8 0,#b4c194 2px,#a9b688 9px,#a5b385 17px,#adbb8c 23px,#bdcb99 28px,#bfcd9a 31px,#98aa78 33px);border:1px solid #7e9560;border-bottom:none"></div>
<div class="a" style="left:361px;top:697px;width:556px;height:4px;background:linear-gradient(#c8d6a0,#9cb078 2px,#6e8a50 4px)"></div>
<div class="a" style="left:365px;top:327px;width:548px;height:370px;background:#ece9d8"></div>
<div class="t" style="left:369px;top:301px;font-size:18.5px;font-weight:bold;line-height:24px;color:#fff;transform:scaleY(1.09);transform-origin:0 18px;text-shadow:1px 1px 0 #4a5530,1px 1px 2px #56643e">Account Manager</div>
<div class="a" style="left:886px;top:299px;width:25px;height:25px;border:1px solid #fff;border-radius:3px;background:linear-gradient(135deg,#e88a68,#d9643c 45%,#c24a1c)"></div>
<svg style="left:890px;top:303px" width="17" height="17"><path d="M2 2L15 15M15 2L2 15" stroke="#fff" stroke-width="3.2"/></svg>

<!-- tabs -->
<div class="a" style="left:373px;top:337px;width:37px;height:20px;border:1px solid #aaa897;border-bottom:none;border-radius:3px 3px 0 0;background:linear-gradient(#fefefc,#f1efe4)"></div>
<div class="a" style="left:482px;top:337px;width:63px;height:20px;border:1px solid #aaa897;border-bottom:none;border-radius:3px 3px 0 0;background:linear-gradient(#fefefc,#f1efe4)"></div>
<div class="t" style="left:378px;top:338px">Main</div>
<div class="t" style="left:487px;top:338px">Advanced</div>
<!-- panel -->
<div class="a" style="left:373px;top:356px;width:528px;height:294px;border:1px solid #919b9c;border-top-color:#919b9c;background:linear-gradient(#fbfbfb,#f5f4f0 45%,#f2f1eb)"></div>
<div class="a" style="left:409px;top:335px;width:74px;height:22px;background:#fff;border:3px solid #ff0000"></div>
<div class="t" style="left:414px;top:336px">Connection</div>

<!-- groupbox 1 -->
<div class="a" style="left:386px;top:376px;width:502px;height:99px;border:1px solid #cfd2bf;border-radius:4px"></div>
<div class="a" style="left:392px;top:372px;width:97px;height:13px;background:#f4f3ee"></div>
<div class="t" style="left:394px;top:369px">Connection Type</div>
<div class="chk" style="left:397px;top:394px"></div>
<svg style="left:399px;top:396px" width="9" height="9"><path d="M1 4.5L3.5 7 8 1.5" fill="none" stroke="#c3c6b4" stroke-width="1.6"/></svg>
<div class="t gray" style="left:416px;top:392px">Passi<span class="u">v</span>e Mode</div>
<div class="chk" style="left:834px;top:394px"></div>
<div class="t gray" style="left:853px;top:392px"><span class="u">I</span>Pv6</div>
<div class="t" style="left:395px;top:418px"><span class="u">S</span>ecurity:</div>
<svg style="left:460px;top:414px" width="14" height="24"><path d="M8 1.8H11V22.8H8V5.8L3.4 9 2.6 6.4z" fill="#f00"/></svg>
<div class="inp" style="left:472px;top:415px;width:301px;height:22px"></div>
<div class="t" style="left:476px;top:418px">SFTP</div>
<div class="sb" style="left:754px;top:417px;width:17px;height:18px"></div>
<svg style="left:758px;top:422px" width="9" height="7"><path d="M1 1.5L4.5 5 8 1.5" fill="none" stroke="#fff" stroke-width="2"/></svg>
<div class="t" style="left:783px;top:418px">P<span class="u">o</span>rt:</div>
<svg style="left:804px;top:413px" width="18" height="26"><path d="M3.3 7.8C3.3 4.5 5.5 2.8 8.6 2.8 11.8 2.8 13.8 4.8 13.8 7.6 13.8 10 12.3 11.6 10.3 13.6L3.8 20.2" fill="none" stroke="#f00" stroke-width="3"/><rect x="2" y="19.7" width="13.2" height="3.2" fill="#f00"/></svg>
<div class="inp" style="left:820px;top:414px;width:61px;height:23px"></div>
<div class="t" style="left:820px;top:418px;width:57px;text-align:right">2222</div>
<div class="t" style="left:395px;top:447px">Pr<span class="u">i</span>vate Key:</div>
<div class="inp" style="left:472px;top:443px;width:317px;height:23px"></div>
<div class="btn" style="left:799px;top:441px;width:80px;height:25px"><span class="u">B</span>rowse...</div>

<!-- groupbox 2 -->
<div class="a" style="left:386px;top:489px;width:501px;height:106px;border:1px solid #cfd2bf;border-radius:4px"></div>
<div class="a" style="left:392px;top:481px;width:100px;height:15px;background:#f3f2ec"></div>
<div class="t" style="left:394px;top:481px">Initial Directories</div>
<div class="t" style="left:395px;top:512px"><span class="u">L</span>ocal:</div>
<div class="inp" style="left:453px;top:507px;width:335px;height:26px"></div>
<div class="btn" style="left:798px;top:507px;width:81px;height:25px">Use <span class="u">C</span>urrent</div>
<div class="t" style="left:395px;top:542px"><span class="u">R</span>emote:</div>
<div class="inp" style="left:453px;top:537px;width:335px;height:26px"></div>
<div class="btn" style="left:798px;top:537px;width:81px;height:25px">Use C<span class="u">u</span>rrent</div>
<div class="chk" style="left:627px;top:571px"></div>
<div class="t gray" style="left:646px;top:567px">Keep directories in s<span class="u">y</span>nc while navigating</div>

<!-- buttons -->
<div class="btn" style="left:725px;top:659px;width:80px;height:25px;border-color:#3f6a22;box-shadow:inset 0 0 0 2px #92c46a;line-height:25px">Labi</div>
<div class="btn" style="left:817px;top:659px;width:80px;height:25px;line-height:25px">Atcelt</div>
</body></html>
